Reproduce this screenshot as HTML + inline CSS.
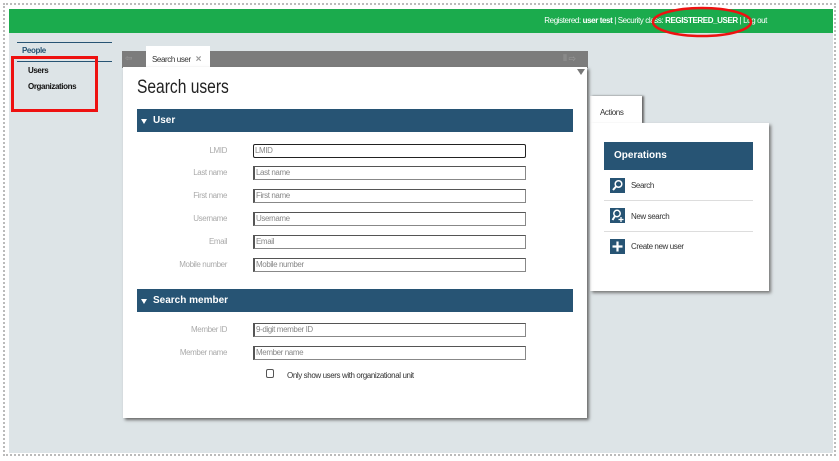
<!DOCTYPE html>
<html><head><style>
*{margin:0;padding:0;box-sizing:border-box}
body{width:839px;height:461px;background:#fff;font-family:"Liberation Sans",sans-serif;position:relative;overflow:hidden;letter-spacing:-0.4px}
.abs{position:absolute}
.frame{left:3px;top:3px;width:833px;height:453px;border:2px dotted #bbb}
.bg{left:9px;top:9px;width:824px;height:444px;background:#dde4e7}
.green{left:9px;top:9px;width:824px;height:24px;background:#1bab4d;color:#fff;font-size:8px;line-height:24px;text-align:right;padding-right:66px}
.lbl{font-size:8px;color:#aaa;text-align:right;width:120px;left:107px}
.inp{left:253px;width:273px;height:14px;border:1px solid #888;border-top-color:#555;border-left:2px solid #555;font-size:8px;color:#888;line-height:12px;padding-left:1px;background:#fff}
.hdr{background:#275474;color:#fff;font-size:10px;font-weight:bold;line-height:23px;padding-left:16px;letter-spacing:0}
.hdr:before{content:"";position:absolute;left:4px;top:10px;border:3.5px solid transparent;border-top:5px solid #fff}
.op{font-size:8px;color:#333;left:631px}
.ic{left:610px;width:15px;height:15px;background:#275474}
.dv{left:604px;width:149px;height:1px;background:#ddd}
</style></head><body>
<div class="abs frame"></div>
<div class="abs bg"></div>
<div class="abs green">Registered: <b>user test</b> | Security class: <b>REGISTERED_USER</b> | Log out</div>
<svg class="abs" style="left:650px;top:5px" width="104" height="36"><ellipse cx="52" cy="17" rx="49" ry="14" fill="none" stroke="#e11" stroke-width="2.5"/></svg>
<div class="abs" style="left:17px;top:42px;width:95px;height:1px;background:#275474"></div>
<div class="abs" style="left:22px;top:46px;font-size:8px;color:#275474;font-weight:bold">People</div>
<div class="abs" style="left:17px;top:61px;width:95px;height:1px;background:#275474"></div>
<div class="abs" style="left:28px;top:66px;font-size:8px;font-weight:bold;color:#111">Users</div>
<div class="abs" style="left:28px;top:82px;font-size:8px;font-weight:bold;color:#111">Organizations</div>
<div class="abs" style="left:11px;top:56px;width:87px;height:56px;border:3px solid #e11"></div>

<div class="abs" style="left:590px;top:96px;width:52px;height:28px;background:#fff;box-shadow:2px 0 2px #666;font-size:8px;color:#333;padding:12px 0 0 10px">Actions</div>
<div class="abs" style="left:590px;top:123px;width:179px;height:168px;background:#fff;box-shadow:2px 2px 3px #777"></div>
<div class="abs" style="left:604px;top:142px;width:149px;height:28px;background:#275474;color:#fff;font-size:10px;font-weight:bold;line-height:28px;padding-left:10px;letter-spacing:0">Operations</div>
<div class="abs ic" style="top:178px"><svg width="15" height="15"><circle cx="8.5" cy="6" r="3.3" fill="none" stroke="#fff" stroke-width="1.5"/><path d="M6 8.5 L3 12" stroke="#fff" stroke-width="2"/></svg></div>
<div class="abs op" style="top:181px">Search</div>
<div class="abs dv" style="top:200px"></div>
<div class="abs ic" style="top:208px"><svg width="15" height="15"><circle cx="7" cy="5.5" r="3.2" fill="none" stroke="#fff" stroke-width="1.5"/><path d="M5 8 L2.5 12" stroke="#fff" stroke-width="2"/><path d="M11 9v5M8.5 11.5h5" stroke="#fff" stroke-width="1.3"/></svg></div>
<div class="abs op" style="top:212px">New search</div>
<div class="abs dv" style="top:231px"></div>
<div class="abs ic" style="top:239px"><svg width="15" height="15"><path d="M7.5 2.5v10M2.5 7.5h10" stroke="#fff" stroke-width="2.2"/></svg></div>
<div class="abs op" style="top:242px">Create new user</div>

<div class="abs" style="left:122px;top:51px;width:466px;height:17px;background:#7c7c7c"></div>
<div class="abs" style="left:125px;top:53px;font-size:9px;color:#999">⇦</div>
<div class="abs" style="left:563px;top:53px;font-size:9px;color:#999">⦀ ⇨</div>
<div class="abs" style="left:146px;top:46px;width:64px;height:22px;background:#fff;font-size:8px;color:#333;padding:8px 0 0 6px">Search user <b style="color:#999;font-size:10px;margin-left:3px">×</b></div>
<div class="abs" style="left:123px;top:67px;width:464px;height:351px;background:#fff;box-shadow:2px 2px 3px #666"></div>
<div class="abs" style="left:577px;top:69px;border:4px solid transparent;border-top:6px solid #777"></div>
<div class="abs" style="left:137px;top:77px;font-size:19px;color:#222;transform:scaleX(.82);transform-origin:left;letter-spacing:0">Search users</div>
<div class="abs hdr" style="left:137px;top:109px;width:436px;height:23px">User</div>
<div class="abs lbl" style="top:146px">LMID</div><div class="abs inp" style="top:144px;border:1.5px solid #222;border-radius:2px">LMID</div>
<div class="abs lbl" style="top:168px">Last name</div><div class="abs inp" style="top:166px">Last name</div>
<div class="abs lbl" style="top:191px">First name</div><div class="abs inp" style="top:189px">First name</div>
<div class="abs lbl" style="top:214px">Username</div><div class="abs inp" style="top:212px">Username</div>
<div class="abs lbl" style="top:237px">Email</div><div class="abs inp" style="top:235px">Email</div>
<div class="abs lbl" style="top:260px">Mobile number</div><div class="abs inp" style="top:258px">Mobile number</div>
<div class="abs hdr" style="left:137px;top:289px;width:436px;height:23px">Search member</div>
<div class="abs lbl" style="top:325px">Member ID</div><div class="abs inp" style="top:323px">9-digit member ID</div>
<div class="abs lbl" style="top:348px">Member name</div><div class="abs inp" style="top:346px">Member name</div>
<div class="abs" style="left:266px;top:369px;width:8px;height:9px;border:1px solid #555;border-radius:2px"></div>
<div class="abs" style="left:287px;top:371px;font-size:8px;color:#333">Only show users with organizational unit</div>
</body></html>
